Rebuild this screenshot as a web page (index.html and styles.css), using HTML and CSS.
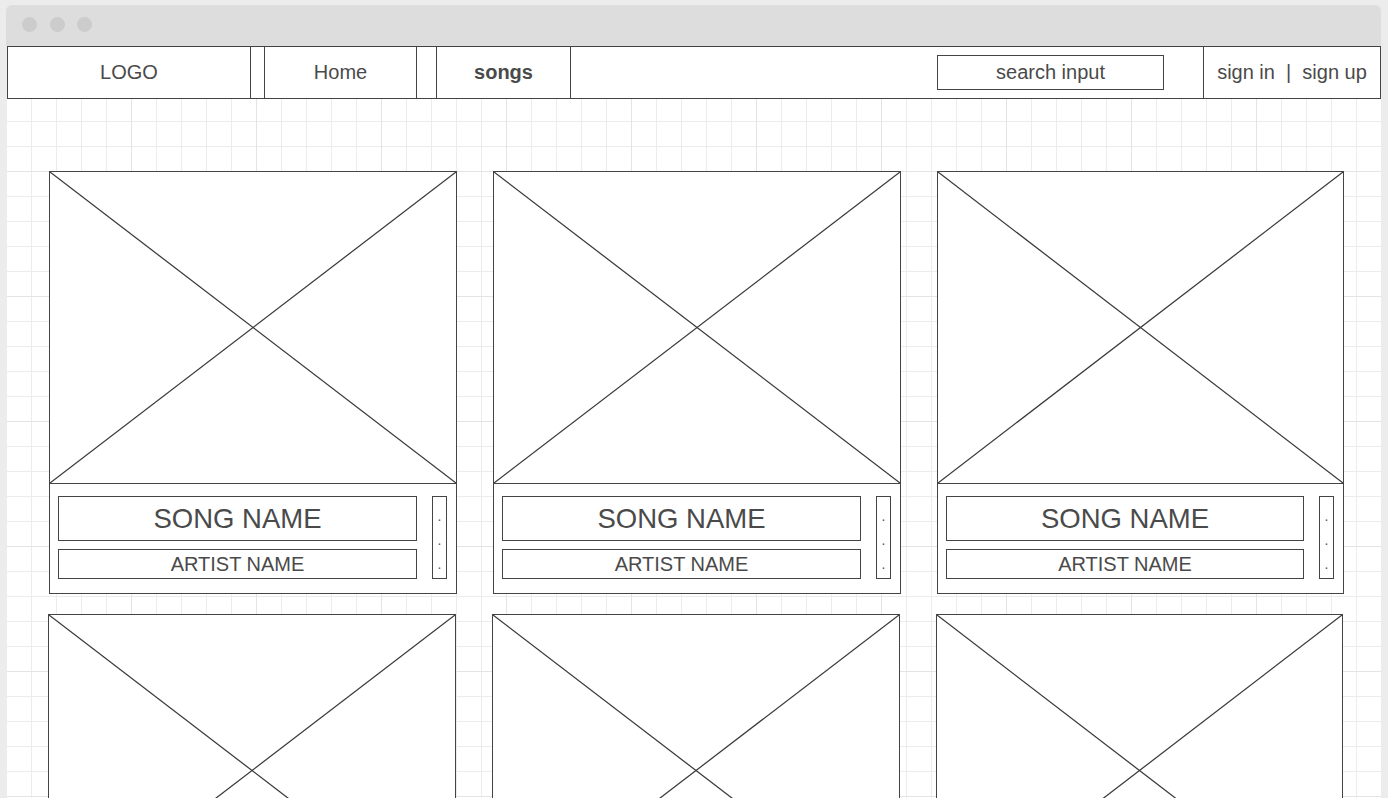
FILE: index.html
```html
<!DOCTYPE html>
<html>
<head>
<meta charset="utf-8">
<title>Songs wireframe</title>
<link rel="stylesheet" href="styles.css">
</head>
<body>
<div class="window">
  <div class="titlebar"><span class="dot"></span><span class="dot"></span><span class="dot"></span></div>
  <div class="page">
    <nav class="nav">
      <div class="cell logo">LOGO</div>
      <div class="cell gap1"></div>
      <div class="cell home">Home</div>
      <div class="cell gap2"></div>
      <div class="cell songs">songs</div>
      <div class="cell spacer"><div class="search">search input</div></div>
      <div class="cell auth">sign in&nbsp;&nbsp;|&nbsp;&nbsp;sign up</div>
    </nav>
    <main class="grid">
      <div class="card">
        <div class="img"><svg viewBox="0 0 100 100" preserveAspectRatio="none"><line x1="0" y1="0" x2="100" y2="100"/><line x1="100" y1="0" x2="0" y2="100"/></svg></div>
        <div class="info"><div class="txt"><div class="song">SONG NAME</div><div class="artist">ARTIST NAME</div></div><div class="more"><span>.</span><span>.</span><span>.</span></div></div>
      </div>
      <div class="card">
        <div class="img"><svg viewBox="0 0 100 100" preserveAspectRatio="none"><line x1="0" y1="0" x2="100" y2="100"/><line x1="100" y1="0" x2="0" y2="100"/></svg></div>
        <div class="info"><div class="txt"><div class="song">SONG NAME</div><div class="artist">ARTIST NAME</div></div><div class="more"><span>.</span><span>.</span><span>.</span></div></div>
      </div>
      <div class="card">
        <div class="img"><svg viewBox="0 0 100 100" preserveAspectRatio="none"><line x1="0" y1="0" x2="100" y2="100"/><line x1="100" y1="0" x2="0" y2="100"/></svg></div>
        <div class="info"><div class="txt"><div class="song">SONG NAME</div><div class="artist">ARTIST NAME</div></div><div class="more"><span>.</span><span>.</span><span>.</span></div></div>
      </div>
      <div class="card row2">
        <div class="img"><svg viewBox="0 0 100 100" preserveAspectRatio="none"><line x1="0" y1="0" x2="100" y2="100"/><line x1="100" y1="0" x2="0" y2="100"/></svg></div>
        <div class="info"><div class="txt"><div class="song">SONG NAME</div><div class="artist">ARTIST NAME</div></div><div class="more"><span>.</span><span>.</span><span>.</span></div></div>
      </div>
      <div class="card row2">
        <div class="img"><svg viewBox="0 0 100 100" preserveAspectRatio="none"><line x1="0" y1="0" x2="100" y2="100"/><line x1="100" y1="0" x2="0" y2="100"/></svg></div>
        <div class="info"><div class="txt"><div class="song">SONG NAME</div><div class="artist">ARTIST NAME</div></div><div class="more"><span>.</span><span>.</span><span>.</span></div></div>
      </div>
      <div class="card row2">
        <div class="img"><svg viewBox="0 0 100 100" preserveAspectRatio="none"><line x1="0" y1="0" x2="100" y2="100"/><line x1="100" y1="0" x2="0" y2="100"/></svg></div>
        <div class="info"><div class="txt"><div class="song">SONG NAME</div><div class="artist">ARTIST NAME</div></div><div class="more"><span>.</span><span>.</span><span>.</span></div></div>
      </div>
    </main>
  </div>
</div>
</body>
</html>
```

FILE: styles.css
```css
html, body {
  margin: 0;
  height: 100%;
  overflow: hidden;
}
body {
  background: #ececec;
  font-family: "Liberation Sans", Arial, sans-serif;
  color: #4a4a4a;
  padding: 5px 0 0 6px;
  box-sizing: border-box;
}
.window {
  width: 1375px;
  height: 793px;
  display: flex;
  flex-direction: column;
}
.titlebar {
  height: 41px;
  flex: none;
  background: #dddddd;
  border-radius: 6px 6px 0 0;
  display: flex;
  align-items: flex-start;
  gap: 12.5px;
  padding: 12px 0 0 16px;
  box-sizing: border-box;
}
.dot {
  width: 15px;
  height: 15px;
  border-radius: 50%;
  background: #cccccc;
}
.page {
  flex: 1;
  margin-left: 1px;
  display: flex;
  flex-direction: column;
  overflow: hidden;
  background: #fff;
}
.nav {
  flex: none;
  height: 53px;
  box-sizing: border-box;
  border: 1px solid #444;
  display: flex;
  font-size: 20px;
  background: #fff;
}
.cell {
  display: flex;
  align-items: center;
  justify-content: center;
  border-right: 1px solid #444;
}
.logo { width: 242px; }
.gap1 { width: 13px; }
.home { width: 151px; }
.gap2 { width: 19px; }
.songs { width: 133px; font-weight: bold; }
.spacer {
  flex: 1;
  justify-content: flex-end;
  padding-right: 39px;
}
.search {
  width: 227px;
  height: 35px;
  box-sizing: border-box;
  border: 1px solid #444;
  display: flex;
  align-items: center;
  justify-content: center;
}
.auth {
  width: 176px;
  border-right: none;
}
.grid {
  flex: 1;
  padding: 72px 0 0 42px;
  display: grid;
  grid-template-columns: 408px 408px 407px;
  grid-auto-rows: max-content;
  column-gap: 36px;
  row-gap: 20px;
  background-color: #fff;
  background-image:
    linear-gradient(to right, #e4e4e4 1px, transparent 1px),
    linear-gradient(to bottom, #e4e4e4 1px, transparent 1px),
    linear-gradient(to right, #ececec 1px, transparent 1px),
    linear-gradient(to bottom, #ececec 1px, transparent 1px);
  background-size: 125px 125px, 125px 125px, 25px 25px, 25px 25px;
  background-position: 124px 0, 0 72px, 24px 0, 0 22px;
}
.card {
  border: 1px solid #444;
  background: #fff;
}
.row2 {
  margin-left: -1px;
  margin-right: 1px;
}
.img {
  height: 311px;
  border-bottom: 1px solid #444;
}
.img svg {
  display: block;
  width: 100%;
  height: 100%;
}
.img line {
  stroke: #3a3a3a;
  stroke-width: 1.25;
  vector-effect: non-scaling-stroke;
}
.info {
  display: flex;
  gap: 15px;
  padding: 12px 9px 14px 8px;
}
.txt {
  flex: 1;
  display: flex;
  flex-direction: column;
  gap: 8px;
}
.song, .artist {
  border: 1px solid #444;
  box-sizing: border-box;
  display: flex;
  align-items: center;
  justify-content: center;
}
.song {
  height: 45px;
  font-size: 27.5px;
}
.artist {
  height: 30px;
  font-size: 20px;
}
.more {
  width: 15px;
  box-sizing: border-box;
  border: 1px solid #444;
  display: flex;
  flex-direction: column;
  align-items: center;
  padding-top: 7px;
  font-size: 14px;
  color: #555;
}
.more span {
  height: 24px;
  line-height: 24px;
}
```
